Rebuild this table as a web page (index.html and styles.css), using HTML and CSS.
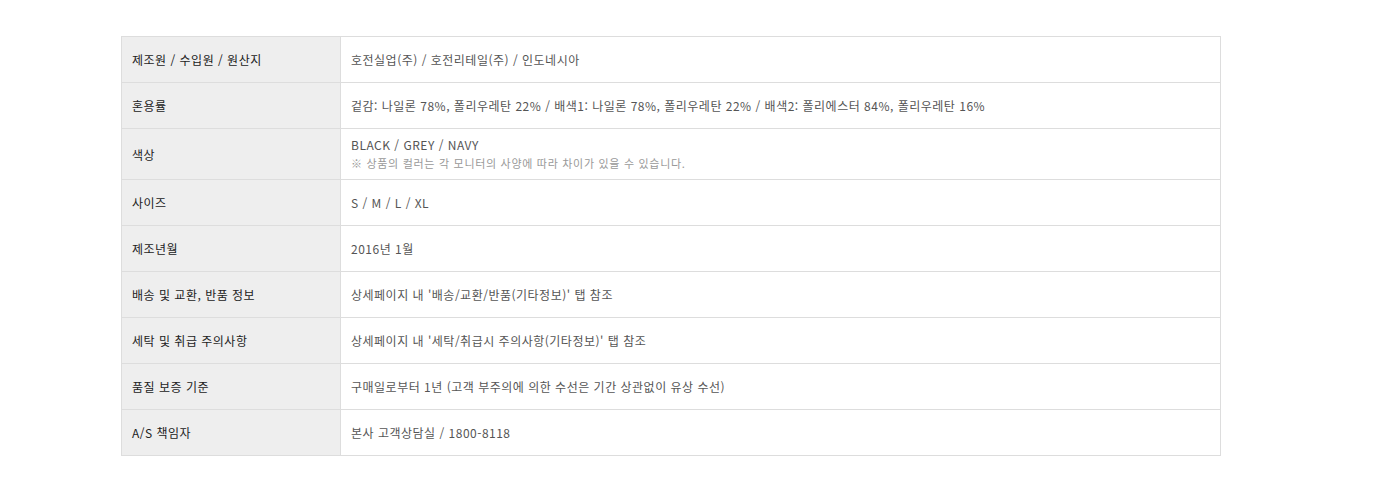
FILE: index.html
```html
<!DOCTYPE html>
<html lang="ko">
<head>
<meta charset="utf-8">
<title>상품 정보</title>
<link rel="stylesheet" href="styles.css">
</head>
<body>
<table class="info">
  <tbody>
    <tr><th>제조원 / 수입원 / 원산지</th><td>호전실업(주) / 호전리테일(주) / 인도네시아</td></tr>
    <tr><th>혼용률</th><td>겉감: 나일론 78%, 폴리우레탄 22% / 배색1: 나일론 78%, 폴리우레탄 22% / 배색2: 폴리에스터 84%, 폴리우레탄 16%</td></tr>
    <tr><th>색상</th><td class="multi">BLACK / GREY / NAVY<span class="note">※ 상품의 컬러는 각 모니터의 사양에 따라 차이가 있을 수 있습니다.</span></td></tr>
    <tr><th>사이즈</th><td>S / M / L / XL</td></tr>
    <tr><th>제조년월</th><td>2016년 1월</td></tr>
    <tr><th>배송 및 교환, 반품 정보</th><td>상세페이지 내 '배송/교환/반품(기타정보)' 탭 참조</td></tr>
    <tr><th>세탁 및 취급 주의사항</th><td>상세페이지 내 '세탁/취급시 주의사항(기타정보)' 탭 참조</td></tr>
    <tr><th>품질 보증 기준</th><td>구매일로부터 1년 (고객 부주의에 의한 수선은 기간 상관없이 유상 수선)</td></tr>
    <tr><th>A/S 책임자</th><td>본사 고객상담실 / 1800-8118</td></tr>
  </tbody>
</table>
</body>
</html>
```
FILE: styles.css
```css
html, body {
  margin: 0;
  padding: 0;
  background: #fff;
}
body {
  padding: 36px 0 0 121px;
  font-family: "Noto Sans CJK KR", "Noto Sans", sans-serif;
  font-size: 12px;
}
.info {
  border-collapse: collapse;
  width: 1100px;
  table-layout: fixed;
}
.info th, .info td {
  border: 1px solid #dddddd;
  padding: 14px 10px 13px;
  line-height: 18px;
  letter-spacing: 0.5px;
  text-align: left;
  vertical-align: middle;
}
.info th {
  width: 198px;
  background: #eeeeee;
  color: #222222;
  font-weight: normal;
}
.info td {
  color: #555555;
}
.info td.multi {
  padding-top: 7px;
  padding-bottom: 7px;
}
.note {
  display: block;
  font-size: 11px;
  line-height: 18px;
  letter-spacing: 0.7px;
  color: #999999;
}
```
